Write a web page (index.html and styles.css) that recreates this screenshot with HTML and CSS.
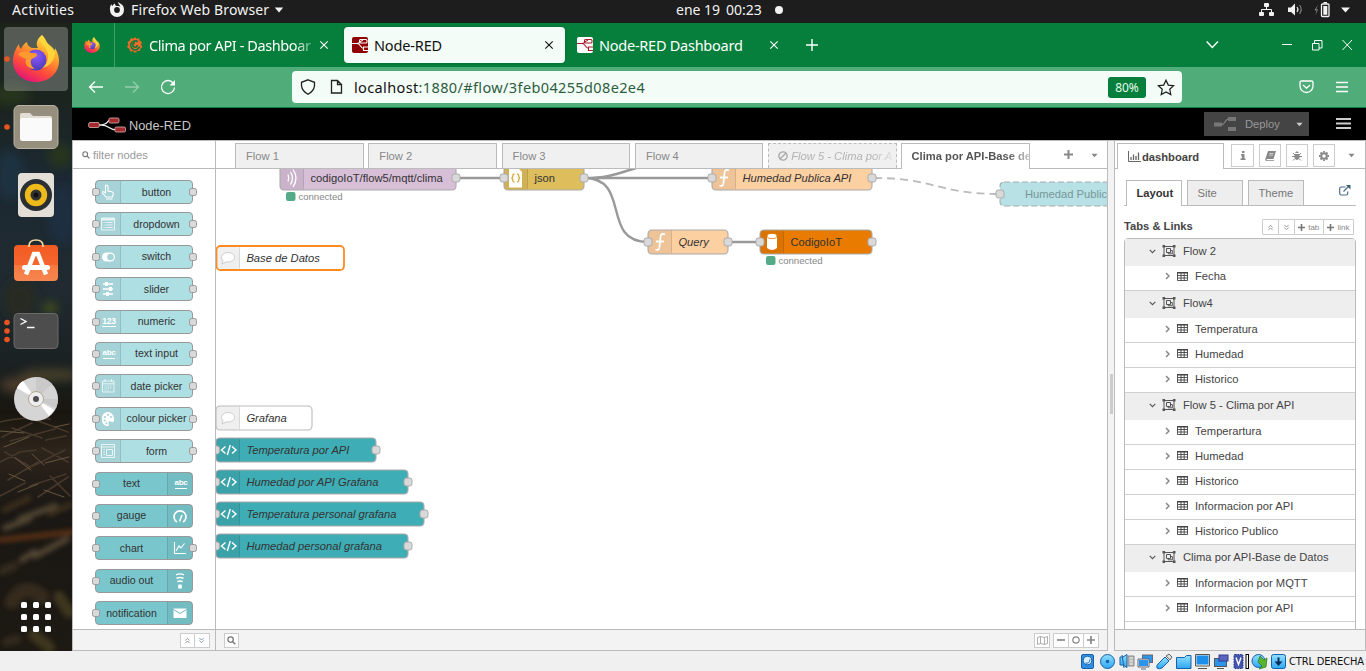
FILE: index.html
```html
<!DOCTYPE html>
<html lang="es">
<head>
<meta charset="utf-8">
<title>Node-RED</title>
<link rel="stylesheet" href="styles.css">
</head>
<body>
<svg class="defs" width="0" height="0" aria-hidden="true">
  <defs>
    <linearGradient id="fxFlame" x1="0.8" y1="0" x2="0.3" y2="1"><stop offset="0" stop-color="#fff44f"/><stop offset=".35" stop-color="#ffa62b"/><stop offset=".7" stop-color="#ff4b3a"/><stop offset="1" stop-color="#e3127a"/></linearGradient>
    <radialGradient id="fxGlobe" cx=".5" cy=".3" r=".7"><stop offset="0" stop-color="#9059ff"/><stop offset="1" stop-color="#4a3bb5"/></radialGradient>
    <linearGradient id="bag" x1="0" y1="0" x2="0" y2="1"><stop offset="0" stop-color="#f25c22"/><stop offset=".55" stop-color="#f4662e"/><stop offset=".56" stop-color="#f6793f"/><stop offset="1" stop-color="#f68650"/></linearGradient>
    <linearGradient id="vb" x1="0" y1="0" x2="0" y2="1"><stop offset="0" stop-color="#8fe0ff"/><stop offset="1" stop-color="#2fa6f0"/></linearGradient>
  </defs>
  <symbol id="firefox" viewBox="0 0 46 48">
    <path d="M29 1c4 4 5 8 7 11 2 1 4 3 4 5 2-1 2-1 2-3 3 5 4 9 4 13 0 12-10 21-23 21S0 39 0 27c0-7 3-13 6-17 0 3 1 4 2 5 1-3 4-6 6-7 0 3 2 5 5 6h6c-3-5 0-10 4-13z" fill="url(#fxFlame)"/>
    <circle cx="23" cy="26" r="10.5" fill="url(#fxGlobe)"/>
    <path d="M5 20c4-3 9-3 13-1 3 0 6 0 6 2-1 3-5 3-6 5-1 4 1 7 4 9-8 0-11-6-9-10-3-1-6-3-8-5z" fill="#ff9a2e"/>
    <path d="M29 1c-4 6 1 9 4 14 4 7 2 15-4 19 9-2 13-9 13-16-1-7-11-8-13-17z" fill="#ffd93b" opacity=".85"/>
  </symbol>
  <symbol id="times" viewBox="0 0 10 10"><path d="M1.300 1.300l7.400 7.400M8.700 1.300L1.300 8.700" fill="none" stroke="currentColor" stroke-width="1.100"/></symbol>
  <symbol id="nrfav" viewBox="0 0 16 16"><path d="M0 6.5h5c4 0 2.500-3 6-3M5 6.500c4 0 3 5 7 5" fill="none" stroke="currentColor" stroke-width="1.100"/><rect x="7.500" y="2.500" width="7.500" height="3.500" rx="1" fill="none" stroke="currentColor" stroke-width="1.100"/><path d="M16 10h-4.500v3.500H16" fill="none" stroke="currentColor" stroke-width="1.100"/></symbol>
  <symbol id="dblup" viewBox="0 0 8 8"><path d="M1.500 4L4 1.500 6.500 4M1.500 7L4 4.500 6.500 7" fill="none" stroke="currentColor"/></symbol>
  <symbol id="dbldown" viewBox="0 0 8 8"><path d="M1.500 1L4 3.500 6.500 1M1.500 4L4 6.500 6.500 4" fill="none" stroke="currentColor"/></symbol>
  <symbol id="caret" viewBox="0 0 8 5"><path d="M.5.500h7L4 4.500z" fill="currentColor"/></symbol>
  <symbol id="search" viewBox="0 0 10 10"><circle cx="4" cy="4" r="3" fill="none" stroke="currentColor" stroke-width="1.400"/><path d="M6.300 6.300L9.200 9.200" stroke="currentColor" stroke-width="1.600"/></symbol>
  <symbol id="group" viewBox="0 0 14 12"><path d="M2 1.500h10v9H2zM4.500 3.500h4v4h-4zM8.500 5.500h1.800v3.300H6.200V7.500" fill="none" stroke="currentColor"/><path d="M.5 0h2.600v2.600H.5zM10.900 0h2.600v2.600h-2.600zM.5 9.400h2.600V12H.5zM10.900 9.400h2.600V12h-2.600z" fill="currentColor"/></symbol>
  <symbol id="table" viewBox="0 0 11 9"><path d="M.5.500h10v8H.5zM.5 3.500h10M.5 6h10M4 1v7.500M7.200 1v7.500" fill="none" stroke="currentColor" stroke-width=".9"/><path d="M0 0h11v1.500H0z" fill="currentColor"/></symbol>
  <symbol id="down" viewBox="0 0 7 5"><path d="M.7.800L3.500 3.700 6.300.800" fill="none" stroke="currentColor" stroke-width="1.100"/></symbol>
  <symbol id="right" viewBox="0 0 5 8"><path d="M1 1l3 3-3 3" fill="none" stroke="currentColor" stroke-width="1.500"/></symbol>
</svg>

<header class="topbar">
  <span class="activities">Activities</span>
  <svg class="ff-mono" viewBox="0 0 16 16"><path d="M1 8a7 7 0 0 0 14 0c0-3-1-5-3-6-1-1-2-1-3-2 0 2 2 3 2.500 5C10 3.500 8.500 4 7.500 4 6 3.500 6 2.500 6 1.500 4.500 2 4 3 3.500 4 2.500 3.500 2.500 2.500 2.500 2 1 4 .8 6 1 8z" fill="#f2f2f2"/><circle cx="8" cy="8" r="2.900" fill="#1d1d1d"/></svg>
  <span class="app-name">Firefox Web Browser</span>
  <svg class="app-caret"><use href="#caret"/></svg>
  <span class="clock-day">ene 19</span><span class="clock-time">00:23</span><i class="dot"></i>
  <svg class="tray" width="93" height="17" viewBox="0 0 93 17">
    <g fill="#f2f2f2"><rect x="7" y="2" width="5" height="4" rx="1"/><rect x="2" y="11" width="5" height="4" rx="1"/><rect x="12" y="11" width="5" height="4" rx="1"/><path d="M31 6.500h3L38 2.500v12L34 11h-3zM93 6.500h-9l4.500 5z"/></g>
    <path d="M9.500 6v3M4.500 11V8.500h10V11" fill="none" stroke="#f2f2f2"/>
    <path d="M40 6q2 2.500 0 5" fill="none" stroke="#ddd" stroke-width="1.200"/><path d="M42.500 4q3.500 4.500 0 9" fill="none" stroke="#777" stroke-width="1.200"/>
    <path d="M61 4l-3.500 5.200h2.200L58.500 14 61 8.500h-2z" fill="#999"/>
    <rect x="64.500" y="3" width="7.500" height="12.500" rx="1" fill="none" stroke="#f2f2f2" stroke-width="1.300"/><path d="M66.300 5h4v8.700h-4zM66.500 1h3.500v1.500h-3.500z" fill="#f2f2f2"/>
  </svg>
</header>

<div class="desktop">
  <nav class="dock">
    <svg class="dock-art" width="72" height="628" viewBox="0 23 72 628">
      <defs>
        <linearGradient id="wall" x1="0" y1="0" x2="0" y2="1"><stop offset="0" stop-color="#1c241a"/><stop offset=".13" stop-color="#1b2420"/><stop offset=".24" stop-color="#1c2932"/><stop offset=".42" stop-color="#202a30"/><stop offset=".55" stop-color="#1b2122"/><stop offset=".62" stop-color="#18160f"/><stop offset=".68" stop-color="#2d241b"/><stop offset=".78" stop-color="#1a1714"/><stop offset="1" stop-color="#1d1913"/></linearGradient>
        <filter id="soft" x="-30%" y="-30%" width="160%" height="160%"><feGaussianBlur stdDeviation="5"/></filter>
        <filter id="soft1" x="-10%" y="-10%" width="120%" height="120%"><feGaussianBlur stdDeviation=".7"/></filter>
        <filter id="soft2" x="-30%" y="-30%" width="160%" height="160%"><feGaussianBlur stdDeviation="2.500"/></filter>
      </defs>
      <rect y="23" width="72" height="628" fill="url(#wall)"/>
      <g filter="url(#soft)"><ellipse cx="10" cy="95" rx="20" ry="10" fill="#26361a"/><ellipse cx="60" cy="155" rx="12" ry="12" fill="#25361b"/><ellipse cx="10" cy="175" rx="14" ry="25" fill="#1c3140"/><ellipse cx="62" cy="215" rx="14" ry="30" fill="#1c2e40"/><ellipse cx="20" cy="300" rx="16" ry="20" fill="#262c24"/><ellipse cx="50" cy="308" rx="7" ry="5" fill="#4c571c"/><ellipse cx="50" cy="375" rx="30" ry="6" fill="#46402c"/><ellipse cx="20" cy="385" rx="20" ry="8" fill="#4b3b2b"/></g>
      <g filter="url(#soft1)" fill="none" stroke-linecap="round">
        <path d="M0 422q25-6 50-3M2 437l30-14M10 441l45-12M30 418l38 14M0 462l20-10 16-2M8 480l30-18M25 470l40-20M42 448l26 14M5 452l24 14M30 486l36-12M50 476l20 20M0 496l25-13M46 440l20-4M12 428l30 10M38 497l30-20" stroke="#44372a" stroke-width="1.700"/>
        <path d="M4 447l25-10M15 458l16 12M45 463l24-6M9 474l16 7M44 490l20 7M0 431l24 2M32 454l12 11M55 427l14-3M18 492l20-8" stroke="#66563f" stroke-width="1"/>
      </g>
      <g filter="url(#soft2)" fill="none" stroke-linecap="round">
        <path d="M0 540l72-8" stroke="#5e3014" stroke-width="5"/><path d="M20 519l35-13M5 528l24-9M35 556l32-17M22 560l12-8" stroke="#514430" stroke-width="6"/><path d="M4 510l25-12M50 514l20-9" stroke="#40301f" stroke-width="5"/><path d="M12 602q12-20 30-5" stroke="#352c1c" stroke-width="15"/><path d="M34 635l15 12M59 597l10 15" stroke="#3d341e" stroke-width="12"/><path d="M2 571l12-5M7 642l10-3" stroke="#332a1a" stroke-width="9"/>
      </g>
      <rect x="4" y="27" width="64" height="64" rx="4" fill="#fff" opacity=".25"/>
      <use href="#firefox" x="13" y="34" width="46" height="48"/>
      <g fill="#e95420"><circle cx="7" cy="59" r="2.800"/><circle cx="7" cy="127" r="2.800"/><circle cx="7" cy="322.500" r="2.800"/><circle cx="7" cy="331" r="2.800"/><circle cx="7" cy="339.500" r="2.800"/></g>
      <rect x="14" y="105.500" width="44" height="43" rx="5" fill="#978f7e" stroke="#b9b2a3"/><path d="M20 115q0-2 2-2h8l3 3h17q2 0 2 2v10H20z" fill="#e2ded5"/><rect x="20" y="118" width="32" height="23" rx="2.500" fill="#fafafa"/>
      <rect x="18" y="173" width="36" height="44" rx="4" fill="#e4dfd6"/><circle cx="36" cy="195" r="16" fill="#2b2f34"/><circle cx="36" cy="195" r="11.200" fill="#edb91b"/><circle cx="36" cy="195" r="5.500" fill="#333"/><circle cx="36" cy="195" r="2.500" fill="#111"/>
      <rect x="14" y="245" width="44" height="36" rx="4" fill="url(#bag)"/><path d="M29 247v-1q0-6 7-6t7 6v1" fill="none" stroke="#f3d6a0" stroke-width="1.700"/><path d="M26 274.500l8-20.500h4l8 20.500" fill="none" stroke="#fff" stroke-width="4.500"/><rect x="22" y="265" width="28" height="5" rx="2.500" fill="#fff"/>
      <rect x="14" y="313.500" width="44" height="35" rx="4" fill="#4d4d4d" stroke="#6a6a6a"/><path d="M20.500 318.500l5.500 3-5.500 3M27 327.500h7.500" fill="none" stroke="#fff" stroke-width="1.400"/>
      <circle cx="36" cy="399" r="22" fill="#d5d5d5"/><path d="M36 399L36 377A22 22 0 0 1 52 384zM36 399L58 399A22 22 0 0 1 56 408z" fill="#c9c9c9"/><path d="M36 399L17 388q2-5 6-7zM36 399l18 11-5 6z" fill="#fff"/><circle cx="36" cy="399" r="7.500" fill="#eee" stroke="#b1a88e"/><circle cx="36" cy="399" r="3" fill="#4e4e4e"/>
      <g fill="#fff"><rect x="21" y="602" width="6" height="6" rx="1.500"/><rect x="33" y="602" width="6" height="6" rx="1.500"/><rect x="45" y="602" width="6" height="6" rx="1.500"/><rect x="21" y="614" width="6" height="6" rx="1.500"/><rect x="33" y="614" width="6" height="6" rx="1.500"/><rect x="45" y="614" width="6" height="6" rx="1.500"/><rect x="21" y="626" width="6" height="6" rx="1.500"/><rect x="33" y="626" width="6" height="6" rx="1.500"/><rect x="45" y="626" width="6" height="6" rx="1.500"/></g>
    </svg>
  </nav>

  <main class="browser">
    <div class="tabbar">
      <div class="pinned"><svg width="16" height="16"><use href="#firefox"/></svg></div>
      <div class="btab first">
        <svg width="16" height="16" viewBox="0 0 16 16"><path d="M8 0l1.500 2 2.500-1 .5 2.500L15 5l-1 2.500L15.500 10l-2 1.500L13 14l-2.700-.3L8 16l-2-2-3 .5L2.500 12 0 10l1.500-2.500L.5 5l2.300-1.200L4 1l2.500.8z" fill="#f26b2a"/><path d="M12.500 9.500A4.500 4.500 0 1 1 10.800 4.700 M10.200 8A2.200 2.200 0 1 1 8 5.900" fill="none" stroke="#0a7a3c" stroke-width="1.600"/></svg>
        <span class="btitle fade">Clima por API - Dashboar</span><svg class="x"><use href="#times"/></svg>
      </div>
      <div class="btab active"><span class="fav red"><svg width="16" height="16"><use href="#nrfav"/></svg></span><span class="btitle t2">Node-RED</span><svg class="x"><use href="#times"/></svg></div>
      <div class="btab third"><span class="fav white"><svg width="16" height="16"><use href="#nrfav"/></svg></span><span class="btitle t3">Node-RED Dashboard</span><svg class="x"><use href="#times"/></svg></div>
      <svg class="plus" width="12" height="12" viewBox="0 0 12 12"><path d="M6 0v12M0 6h12" stroke="#fff" stroke-width="1.400"/></svg>
      <svg class="winctl" width="147" height="12" viewBox="0 0 147 12" fill="none" stroke="#fff"><path d="M.7 2.500L6.300 8.500 12 2.500" stroke-width="1.400"/><path d="M76 5.500h10M106.500 4.500h6.500v6.500h-6.500zM108.500 4V1.500h7.500V9H113M136.500 1l9.500 10M146 1l-9.500 10"/></svg>
    </div>
    <div class="navbar">
      <svg class="navicons" width="88" height="16" viewBox="0 0 88 16" fill="none" stroke="#fff" stroke-width="1.300"><path d="M15 8H1.500M7 2.500L1.500 8 7 13.500"/><path d="M37 8h13.500M45 2.500L50.500 8 45 13.500" opacity=".4"/><path d="M85.500 4.500A6.500 6.500 0 1 0 86.500 8.500"/><path d="M87 1v5.500h-5.500z" fill="#fff" stroke="none"/></svg>
      <div class="urlbar">
        <svg width="46" height="16" viewBox="0 0 46 16" fill="none" stroke="#222" stroke-width="1.300"><path d="M8 .8l6.500 2.500v3.500Q13.800 12 8 15.300 2.200 12 1.500 6.800V3.300z"/><path d="M31.500 1.500h6l4 4v8.500h-10zM37.500 1.500v4h4"/></svg>
        <span class="url"><b>localhost</b>:1880/#flow/3feb04255d08e2e4</span>
        <span class="zoom">80%</span>
        <svg width="18" height="17" viewBox="0 0 18 17"><path d="M9 1.200l2.300 4.900 5.300.6-3.900 3.600 1.100 5.300L9 12.900l-4.800 2.700 1.100-5.300L1.400 6.700l5.300-.6z" fill="none" stroke="#1b1b1b" stroke-width="1.200"/></svg>
      </div>
      <svg class="navright" width="50" height="16" viewBox="0 0 50 16" fill="none" stroke="#fff" stroke-width="1.300"><path d="M1 3.500Q1 2 2.500 2h10Q14 2 14 3.500V7A6.500 6.500 0 0 1 1 7zM4 6l3.500 3.200L11 6"/><path d="M37 3.500h12M37 8h12M37 12.500h12"/></svg>
    </div>

    <div class="nr-header">
      <svg width="40" height="16" viewBox="0 0 40 16"><path d="M10 8c12 0 8-5 13-5.500M13 8c9 0 7 5 16 5" fill="none" stroke="#eee" stroke-width="1.300"/><g fill="#a52a2e" stroke="#c9a3a3" stroke-width=".9"><rect x=".7" y="5.500" width="10.500" height="5" rx="1.300"/><rect x="21" y="1" width="10" height="5" rx="1.300"/><rect x="27" y="10" width="10.500" height="5" rx="1.300"/></g></svg>
      <span class="nr-name">Node-RED</span>
      <div class="deploy"><svg width="22" height="14" viewBox="0 0 22 14"><path d="M0 5.500h8v4H0zM14 0h8v4h-8zM14 10h8v4h-8z" fill="#777"/><path d="M8 7.500c3 0 3-5 6-5.500" fill="none" stroke="#999"/></svg><span>Deploy</span><svg class="dcaret"><use href="#caret"/></svg></div>
      <svg class="burger" width="15" height="13" viewBox="0 0 15 13"><path d="M0 2h15M0 6.500h15M0 11h15" stroke="#ccc" stroke-width="2"/></svg>
    </div>

    <div class="editor">
      <aside class="palette">
        <div class="filter"><svg width="8" height="8"><use href="#search"/></svg><span>filter nodes</span></div>
        <div class="nodes">
          <div class="pnode in out"><i><svg viewBox="0 0 16 16"><path d="M5.500 9V2.200q0-1.200 1.200-1.200T8 2.200V7l4 .8q1.500.4 1.300 2L12.500 13H6L2.500 9q-.3-1.700 1.300-1.200zM6 15h6.500" fill="none" stroke="#fff" stroke-width="1.100"/></svg></i><span>button</span></div>
          <div class="pnode in out"><i><svg viewBox="0 0 16 16"><path d="M1.500 2h13v12h-13z" fill="none" stroke="#e6f4f5"/><path d="M1.500 2h13v2.500h-13z" fill="#e6f4f5"/><path d="M3.500 6.500h1.200m1 0h7M3.500 9h1.200m1 0h7M3.500 11.500h1.200m1 0h7" stroke="#e6f4f5"/></svg></i><span>dropdown</span></div>
          <div class="pnode in out"><i><svg viewBox="0 0 16 16"><rect x="2" y="3.500" width="13" height="9" rx="4.500" fill="#fff"/><circle cx="10.500" cy="8" r="3.300" fill="#a6d3d7"/></svg></i><span>switch</span></div>
          <div class="pnode in out"><i><svg viewBox="0 0 16 16"><path d="M3 3h10M3 8h10M3 13h10" stroke="#fff" stroke-width="1.500"/><path d="M5 1h3v4H5zM9 6h3v4H9zM6 11h3v4H6z" fill="#fff"/></svg></i><span>slider</span></div>
          <div class="pnode in out"><i><b>123</b></i><span>numeric</span></div>
          <div class="pnode in out"><i><b class="abc">abc</b></i><span>text input</span></div>
          <div class="pnode in out"><i><svg viewBox="0 0 16 16"><path d="M2.500 3h11.500v11H2.500zM2.500 5.800H14M5 1v3M11.500 1v3" fill="none" stroke="#e6f4f5"/><path d="M4.500 8h7.500M4.500 10h7.500M4.500 12h5" stroke="#e6f4f5" stroke-dasharray="1 .8"/></svg></i><span>date picker</span></div>
          <div class="pnode in out"><i><svg viewBox="0 0 16 16"><path d="M8 1C3 1 2 5 2 8.500 2 13 5 15.500 8 15c2-.5-.3-3 1-4.500 1.500-1.200 4 2 4.800 0C15 6 12 1 8 1z" fill="#fff"/><g fill="#a6d3d7"><circle cx="5" cy="6" r="1.100"/><circle cx="8" cy="3.800" r="1.100"/><circle cx="11" cy="6" r="1.100"/><circle cx="4.700" cy="9.500" r="1.100"/><circle cx="6.500" cy="12.300" r="1.100"/></g></svg></i><span>colour picker</span></div>
          <div class="pnode in out"><i><svg viewBox="0 0 16 16"><path d="M1.500 1.500h13v13h-13zM1.500 4h13M6.500 6.500h6v6h-6zM3.500 6.500h1.500M3.500 9h1.500M3.500 11.500h1.500" fill="none" stroke="#e6f4f5"/></svg></i><span>form</span></div>
          <div class="pnode in dark"><span>text</span><i><b class="abc">abc</b></i></div>
          <div class="pnode in dark"><span>gauge</span><i><svg viewBox="0 0 16 16"><path d="M5 14A6 6 0 1 1 11 14" fill="none" stroke="#fff" stroke-width="1.700"/><path d="M7.500 13.500L10 7" stroke="#fff" stroke-width="1.500"/></svg></i></div>
          <div class="pnode in out dark"><span>chart</span><i><svg viewBox="0 0 16 16"><path d="M2.500 2v11.500H14M4 11l3-5 2 2 3.500-4.500" fill="none" stroke="#fff" stroke-width="1.100"/></svg></i></div>
          <div class="pnode in dark"><span>audio out</span><i><svg viewBox="0 0 16 18"><path d="M6 13h4v4.500H6z" fill="#fff"/><path d="M3.500 2q4.500-2 9 0M4 6q4-2 8 0M5 9.800q3-1.700 6 0" fill="none" stroke="#fff" stroke-width="1.600"/></svg></i></div>
          <div class="pnode in dark"><span>notification</span><i><svg viewBox="0 0 16 16"><path d="M1.500 3.500h13v9.500h-13z" fill="#fff"/><path d="M1.500 4.500L8 8.500l6.500-4" fill="none" stroke="#70b8bf"/></svg></i></div>
        </div>
        <div class="pfoot"><span><svg><use href="#dblup"/></svg></span><span><svg><use href="#dbldown"/></svg></span></div>
      </aside>

      <section class="workspace">
        <div class="flowtabs">
          <div class="ftab">Flow 1</div><div class="ftab">Flow 2</div><div class="ftab">Flow 3</div><div class="ftab">Flow 4</div>
          <div class="ftab off"><svg width="10" height="10" viewBox="0 0 9 9"><circle cx="4.500" cy="4.500" r="3.700" fill="none" stroke="#aaa" stroke-width="1.300"/><path d="M2 7l5-5" stroke="#aaa" stroke-width="1.300"/></svg><span>Flow 5 - Clima por A</span></div>
          <div class="ftab on"><span>Clima por API-Base de</span></div>
          <svg class="addflow" width="9" height="9" viewBox="0 0 9 9"><path d="M4.500 0v9M0 4.500h9" stroke="#888" stroke-width="2"/></svg>
          <svg class="flowcaret"><use href="#caret"/></svg>
        </div>
        <svg class="canvas" width="891" height="460" viewBox="216 169 891 460">
          <g fill="none" stroke="#999" stroke-width="2.400"><path d="M456 178h48M584 178H712M728 242h32M584 178c48 0 16 64 64 64M584 178c25 0 35-5 52-10"/><path d="M874 178C936 178 936 194 1000 194" stroke="#bbb" stroke-width="1.800" stroke-dasharray="8 5"/></g>
          <g stroke="#aaa" stroke-width="1.100">
            <rect x="280" y="166" width="176" height="24" rx="4" fill="#d8bfd8"/><rect x="504" y="166" width="80" height="24" rx="4" fill="#debd5c"/><rect x="712" y="166" width="160" height="24" rx="4" fill="#fdd0a2"/><rect x="648" y="230" width="80" height="24" rx="4" fill="#fdd0a2"/><rect x="760" y="230" width="112" height="24" rx="4" fill="#e97b00"/>
            <rect x="1000" y="182" width="150" height="24" rx="4" fill="#b7e1e4" stroke-dasharray="6 3"/>
            <rect x="216.500" y="246" width="127.500" height="24" rx="4" fill="#fff" stroke="#ff8a20" stroke-width="1.800"/>
            <rect x="216" y="406" width="96" height="24" rx="4" fill="#fff" stroke="#bbb"/>
            <rect x="216" y="438" width="160" height="24" rx="4" fill="#3fadb5"/><rect x="216" y="470" width="192" height="24" rx="4" fill="#3fadb5"/><rect x="216" y="502" width="208" height="24" rx="4" fill="#3fadb5"/><rect x="216" y="534" width="192" height="24" rx="4" fill="#3fadb5"/>
          </g>
          <g fill="#000" opacity=".06"><rect x="280.500" y="166" width="23" height="23.500" rx="3"/><rect x="504.500" y="166" width="23" height="23.500" rx="3"/><rect x="712.500" y="166" width="23" height="23.500" rx="3"/><rect x="648.500" y="230.500" width="23" height="23" rx="3"/><rect x="760.500" y="230.500" width="23" height="23" rx="3"/><rect x="217.500" y="247" width="22" height="22" rx="3"/><rect x="216.500" y="406.500" width="23" height="23" rx="3"/><rect x="216" y="438.500" width="23.500" height="23" rx="3"/><rect x="216" y="470.500" width="23.500" height="23" rx="3"/><rect x="216" y="502.500" width="23.500" height="23" rx="3"/><rect x="216" y="534.500" width="23.500" height="23" rx="3"/></g>
          <path d="M303.500 166v23.500M527.500 166v23.500M735.500 166v23.500M671.500 230.500v23M783.500 230.500v23M239.500 247v22M239.500 406.500v23M239.500 438.500v23M239.500 470.500v23M239.500 502.500v23M239.500 534.500v23" stroke="#000" opacity=".12"/>
          <g fill="none" stroke="#fff"><path d="M288 174.500q1.500 3.500 0 7M290.500 172q4 6 0 12.500M293 169.500q6 8.500 0 17.500" stroke-width="1.300"/></g>
          <path d="M509 168h9l4 4v15.500h-13z" fill="#fff"/>
          <path d="M514.500 174q-1.700 0-1.700 1.500 0 2.500-1.500 2.500 1.500 0 1.500 2.500 0 1.500 1.700 1.500M517 174q1.700 0 1.700 1.500 0 2.500 1.500 2.500-1.500 0-1.500 2.500 0 1.500-1.700 1.500" fill="none" stroke="#d5ae3f" stroke-width="1.300"/>
          <g fill="none" stroke="#fff" stroke-width="1.800"><path d="M729 170.500q-4-2-4.500 2.500l-1 10q-.5 4-4 2.500M720 177.500h8"/><path d="M665 234.500q-4-2-4.500 2.500l-1 10q-.5 4-4 2.500M656 241.500h8"/></g>
          <path d="M767 236v12q5 4 10 0v-12z" fill="#fff"/><ellipse cx="772" cy="236" rx="5" ry="2.600" fill="#fff" stroke="#dc7400" stroke-width=".8"/>
          <g fill="#fff" stroke="#ccc"><path d="M228 252.500c4 0 6.500 2 6.500 4.800s-3 4.700-6.500 4.700h-2l-4 2 1-3.500c-3.500-3-.5-8 5-8z"/><path d="M228 412.500c4 0 6.500 2 6.500 4.800s-3 4.700-6.500 4.700h-2l-4 2 1-3.500c-3.500-3-.5-8 5-8z"/></g>
          <g fill="#d9d9d9" stroke="#aaa"><rect x="452" y="174" width="8" height="8" rx="2.400"/><rect x="500" y="174" width="8" height="8" rx="2.400"/><rect x="580" y="174" width="8" height="8" rx="2.400"/><rect x="708" y="174" width="8" height="8" rx="2.400"/><rect x="868" y="174" width="8" height="8" rx="2.400"/><rect x="644" y="238" width="8" height="8" rx="2.400"/><rect x="724" y="238" width="8" height="8" rx="2.400"/><rect x="756" y="238" width="8" height="8" rx="2.400"/><rect x="868" y="238" width="8" height="8" rx="2.400"/><rect x="996" y="190" width="8" height="8" rx="2.400"/><rect x="212" y="446" width="7.500" height="8" rx="2.400"/><rect x="212" y="478" width="7.500" height="8" rx="2.400"/><rect x="212" y="510" width="7.500" height="8" rx="2.400"/><rect x="212" y="542" width="7.500" height="8" rx="2.400"/><rect x="372" y="446" width="8" height="8" rx="2.400"/><rect x="404" y="478" width="8" height="8" rx="2.400"/><rect x="420" y="510" width="8" height="8" rx="2.400"/><rect x="404" y="542" width="8" height="8" rx="2.400"/></g>
          <g fill="none" stroke="#fff" stroke-width="1.400"><path d="M225.500 446.500l-4 3.500 4 3.500M232 446.500l4 3.500-4 3.500M230.300 445l-3 10"/><path d="M225.500 478.500l-4 3.500 4 3.500M232 478.500l4 3.500-4 3.500M230.300 477l-3 10"/><path d="M225.500 510.500l-4 3.500 4 3.500M232 510.500l4 3.500-4 3.500M230.300 509l-3 10"/><path d="M225.500 542.500l-4 3.500 4 3.500M232 542.500l4 3.500-4 3.500M230.300 541l-3 10"/></g>
          <g fill="#5a8"><rect x="286" y="192" width="9.500" height="9" rx="2"/><rect x="766" y="256" width="9.500" height="9" rx="2"/></g>
          <g class="label"><text x="310.400" y="182">codigoIoT/flow5/mqtt/clima</text><text x="534.400" y="182">json</text><text x="790.400" y="246">CodigoIoT</text><text x="1025" y="198" class="dim">Humedad Public</text></g>
          <g class="label it"><text x="742.400" y="182">Humedad Publica API</text><text x="678.400" y="246">Query</text><text x="246.400" y="262">Base de Datos</text><text x="246.400" y="422">Grafana</text><text x="246.400" y="454">Temperatura por API</text><text x="246.400" y="486">Humedad por API Grafana</text><text x="246.400" y="518">Temperatura personal grafana</text><text x="246.400" y="550">Humedad personal grafana</text></g>
          <g class="status"><text x="298.400" y="200">connected</text><text x="778.400" y="264">connected</text></g>
        </svg>
        <div class="wfoot">
          <span class="wb"><svg width="9" height="9"><use href="#search"/></svg></span>
          <span class="wb map"><svg width="11" height="9" viewBox="0 0 11 9"><path d="M.5 1.500l3-1 4 1 3-1v7l-3 1-4-1-3 1zM3.500.500v7M7.500 1.500v7" fill="none" stroke="#999" stroke-width=".8"/></svg></span>
          <span class="zoomset"><span class="wb"><svg width="8" height="8" viewBox="0 0 8 8"><path d="M0 4h8" stroke="#888" stroke-width="1.700"/></svg></span><span class="wb"><svg width="8" height="8" viewBox="0 0 8 8"><circle cx="4" cy="4" r="3.200" fill="none" stroke="#888" stroke-width="1.200"/></svg></span><span class="wb"><svg width="8" height="8" viewBox="0 0 8 8"><path d="M0 4h8M4 0v8" stroke="#888" stroke-width="1.700"/></svg></span></span>
        </div>
      </section>

      <div class="splitter"><i></i></div>

      <aside class="sidebar">
        <div class="stabs">
          <div class="stab"><svg width="13" height="11" viewBox="0 0 13 11"><path d="M.5 0v10.500H13" fill="none" stroke="#666"/><path d="M3 9V6M5.500 9V3.500M8 9V5M10.500 9V1.500" stroke="#666" stroke-width="1.300"/></svg><span>dashboard</span></div>
          <span class="sb"><svg width="6" height="9" viewBox="0 0 6 9"><path d="M2 0h2.500v2H2zM1 3h3.500v4.500h1V9h-5V7.500h1.300v-3H1z" fill="#888"/></svg></span>
          <span class="sb b2"><svg width="11" height="10" viewBox="0 0 11 10"><path d="M3 0h8L8.500 8H2q-1 .5 0 1.200h7V10H1.500Q0 9.500.3 8z" fill="#888"/><path d="M4.500 2.500h4M4 4.200h4" stroke="#eee" stroke-width=".7"/></svg></span>
          <span class="sb b3"><svg width="10" height="10" viewBox="0 0 10 10"><path d="M3 2q2-3.500 4 0zM2.500 3h5v4Q5 11 2.500 7z" fill="#888"/><path d="M1 2l2 2M9 2L7 4M0 5.500h10M1 9.500l2-2M9 9.500l-2-2" stroke="#888"/></svg></span>
          <span class="sb b4"><svg width="10" height="10" viewBox="0 0 10 10"><circle cx="5" cy="5" r="2.800" fill="none" stroke="#888" stroke-width="2"/><path d="M5 0v1.500M5 8.500V10M0 5h1.500M8.500 5H10M1.500 1.500l1 1M7.500 7.500l1 1M8.500 1.500l-1 1M2.500 7.500l-1 1" stroke="#888" stroke-width="1.800"/></svg></span>
          <svg class="scaret"><use href="#caret"/></svg>
        </div>
        <div class="dash">
          <div class="dtabs"><div class="dtab sel">Layout</div><div class="dtab">Site</div><div class="dtab">Theme</div>
            <svg width="12" height="11" viewBox="0 0 12 11"><path d="M6.500 2H2.200Q.7 2 .7 3.500v5Q.7 10 2.200 10h5Q8.700 10 8.700 8.500V6.500M4.500 6.500L10 1" fill="none" stroke="#4a6e8c" stroke-width="1.200"/><path d="M7 0h4.500v4.500z" fill="#3c5c78"/></svg></div>
          <div class="tl"><strong>Tabs &amp; Links</strong><span class="tb"><svg><use href="#dblup"/></svg></span><span class="tb"><svg><use href="#dbldown"/></svg></span><span class="tb w1"><svg viewBox="0 0 7 7"><path d="M3.500 0v7M0 3.500h7" stroke="#777" stroke-width="1.600"/></svg>tab</span><span class="tb w2"><svg viewBox="0 0 7 7"><path d="M3.500 0v7M0 3.500h7" stroke="#777" stroke-width="1.600"/></svg>link</span></div>
          <div class="tree">
            <div class="grp"><svg class="c"><use href="#down"/></svg><svg class="g"><use href="#group"/></svg>Flow 2</div>
            <div class="item first-item"><svg class="c"><use href="#right"/></svg><svg class="t"><use href="#table"/></svg>Fecha</div>
            <div class="grp"><svg class="c"><use href="#down"/></svg><svg class="g"><use href="#group"/></svg>Flow4</div>
            <div class="item"><svg class="c"><use href="#right"/></svg><svg class="t"><use href="#table"/></svg>Temperatura</div>
            <div class="item"><svg class="c"><use href="#right"/></svg><svg class="t"><use href="#table"/></svg>Humedad</div>
            <div class="item"><svg class="c"><use href="#right"/></svg><svg class="t"><use href="#table"/></svg>Historico</div>
            <div class="grp"><svg class="c"><use href="#down"/></svg><svg class="g"><use href="#group"/></svg>Flow 5 - Clima por API</div>
            <div class="item"><svg class="c"><use href="#right"/></svg><svg class="t"><use href="#table"/></svg>Temperartura</div>
            <div class="item"><svg class="c"><use href="#right"/></svg><svg class="t"><use href="#table"/></svg>Humedad</div>
            <div class="item"><svg class="c"><use href="#right"/></svg><svg class="t"><use href="#table"/></svg>Historico</div>
            <div class="item"><svg class="c"><use href="#right"/></svg><svg class="t"><use href="#table"/></svg>Informacion por API</div>
            <div class="item"><svg class="c"><use href="#right"/></svg><svg class="t"><use href="#table"/></svg>Historico Publico</div>
            <div class="grp"><svg class="c"><use href="#down"/></svg><svg class="g"><use href="#group"/></svg>Clima por API-Base de Datos</div>
            <div class="item"><svg class="c"><use href="#right"/></svg><svg class="t"><use href="#table"/></svg>Informacion por MQTT</div>
            <div class="item"><svg class="c"><use href="#right"/></svg><svg class="t"><use href="#table"/></svg>Informacion por API</div>
          </div>
        </div>
        <div class="sfoot"></div>
      </aside>
    </div>
  </main>
</div>

<footer class="vmbar">
  <svg width="206" height="18" viewBox="1080 653 206 18">
    <g stroke="#1761a8" fill="url(#vb)">
      <rect x="1081.500" y="654.500" width="12" height="14" rx="1.500" fill="#2f8fe6"/><circle cx="1087.500" cy="660.500" r="4.300" fill="#d8f1ff"/><circle cx="1107.500" cy="661.500" r="7"/>
      <path d="M1120 657h3l4-2.500v13l-4-2.500h-3z"/><path d="M1128 656h6v10h-6z" fill="#bbb" stroke="#888"/>
      <rect x="1142.500" y="655" width="10" height="7.500" fill="#2a95ea" stroke="#667"/><rect x="1138.500" y="659.500" width="10" height="7" fill="#2a95ea" stroke="#eee"/><path d="M1138 659h11v8h-11zM1141 669h5" fill="none" stroke="#667"/>
      <path d="M1158 664l7-7 4 4-7 7q-3 1.500-5 0-1-2 1-4z"/><path d="M1166 656l3-2 3 3-2 3z" fill="#ddd" stroke="#666"/>
      <path d="M1176.500 657.500h8l2-2h4.500v13h-14.500z"/>
      <rect x="1196" y="655" width="13" height="10" fill="#1b8fe9" stroke="#eee"/><path d="M1195.500 654.500h14v11.500h-14zM1198 668.500h9" fill="none" stroke="#555"/>
      <rect x="1214.500" y="658.500" width="12" height="8" fill="#2a95ea" stroke="#555"/><path d="M1217 668.500h7" stroke="#555"/><rect x="1219" y="655" width="9" height="6" fill="#5b65bd" stroke="#303c90"/>
      <rect x="1234" y="654.500" width="9" height="14" rx="1" fill="#4353ae" stroke="#283888" stroke-dasharray="1.500 1"/>
      <circle cx="1258.500" cy="661" r="6.500"/>
      <rect x="1271.500" y="654.500" width="14" height="14" rx="2"/>
    </g>
    <circle cx="1107.500" cy="661.500" r="1.800" fill="#1761a8"/><path d="M1085.500 663q4 1 4.500-3.500M1122 655l2 13" fill="none" stroke="#1761a8"/><path d="M1130 658h3M1130 661h3M1130 664h3" stroke="#eee"/>
    <path d="M1236 657.500l2.500 7 2.500-7" fill="none" stroke="#fff" stroke-width="1.400"/><rect x="1246" y="654.500" width="2.500" height="14" fill="#fff" stroke="#000"/>
    <path d="M1260 656l4 4 3-2-1 9-7 2 3-3-4-4z" fill="#58b531" stroke="#28711a" stroke-width=".7"/>
    <path d="M1277.500 657.500h2v4h3l-4 4.500-4-4.500h3z" fill="#072d5a"/>
  </svg>
  <span>CTRL DERECHA</span>
</footer>
</body>
</html>
```
FILE: styles.css
```css
*, *::before, *::after { box-sizing: border-box; }
html, body { margin: 0; width: 1366px; height: 671px; overflow: hidden; }
body { font: 11.2px "Liberation Sans", Arial, sans-serif; color: #444; background: #f0f0f0; display: flex; flex-direction: column; }
svg { display: block; flex: none; }
span, .btab, .pnode, .ftab, .grp, .item { white-space: nowrap; }
.defs { position: absolute; }

.topbar { height: 23px; flex: none; background: #1d1d1d; color: #f2f2f2; display: flex; align-items: center; padding: 0 16px 4px 12px; font: 14px "Noto Sans", sans-serif; }
.activities { width: 97px; letter-spacing: .4px; }
.ff-mono { width: 16px; height: 16px; }
.app-name { margin-left: 6px; width: 143px; letter-spacing: .15px; }
.app-caret { width: 10px; height: 6px; }
.clock-day { margin-left: 392px; width: 50px; }
.clock-time { width: 49px; }
.dot { width: 8px; height: 8px; border-radius: 50%; background: #f2f2f2; }
.tray { margin-left: auto; }

.desktop { display: flex; height: 628px; flex: none; }
.dock { width: 72px; flex: none; }
.browser { width: 1294px; display: flex; flex-direction: column; }

.tabbar { height: 44px; flex: none; background: #057f3b; display: flex; align-items: center; color: #fff; font: 14.5px "Noto Sans", sans-serif; letter-spacing: -.25px; }
.pinned { width: 43px; height: 44px; border-right: 1px solid #3f9d68; display: flex; align-items: center; padding-left: 12px; }
.btab { display: flex; align-items: center; height: 36px; border-radius: 4px; }
.btab .x { width: 10px; height: 10px; margin-left: auto; }
.btitle { margin-left: 6px; }
.first { width: 220px; padding: 0 6px 0 12px; }
.fade { width: 169px; margin-right: -2px; letter-spacing: -.4px; -webkit-mask-image: linear-gradient(90deg, #000 145px, transparent 172px); mask-image: linear-gradient(90deg, #000 145px, transparent 172px); }
.t2 { letter-spacing: -.15px; }
.active { width: 221px; margin-left: 9px; padding: 0 11px 0 8px; background: #f4fcf7; color: #111; box-shadow: 0 0 3px #0358297a; }
.third { width: 220px; padding: 0 6px 0 12px; }
.fav { width: 16px; height: 16px; border-radius: 2px; }
.red { background: #8f0000; color: #fff; }
.white { background: #fff; color: #a61c28; }
.plus { margin-left: 21px; }
.winctl { margin-left: auto; margin-right: 13px; }

.navbar { height: 41px; flex: none; background: #50ac79; border-bottom: 1px solid #057f3b; display: flex; align-items: center; }
.navicons { margin-left: 16px; }
.urlbar { margin-left: 116px; width: 890px; height: 32px; border-radius: 4px; background: #f4fcf7; display: flex; align-items: center; padding: 0 7px 0 8px; font: 14.5px "Noto Sans", sans-serif; color: #2d5d40; }
.url { margin-left: 8px; letter-spacing: .37px; }
.url b { font-weight: 400; color: #111; }
.zoom { margin-left: auto; margin-right: 11px; width: 38px; height: 21px; line-height: 21px; border-radius: 3px; background: #057f3b; color: #e4fbed; text-align: center; font-size: 12px; }
.navright { margin-left: 117px; }

.nr-header { height: 32px; flex: none; background: #000; display: flex; align-items: center; padding: 2px 15px 0 16px; color: #c7c7c7; font-size: 12.8px; }
.nr-name { margin-left: 1px; }
.deploy { margin-left: auto; width: 105px; height: 24px; margin-bottom: 2px; background: #444; color: #999; display: flex; align-items: center; padding-left: 10px; font-size: 11.2px; }
.deploy span { margin-left: 9px; width: 51px; }
.dcaret { width: 7px; height: 5px; color: #ccc; }
.burger { margin-left: 27px; margin-bottom: 4px; }

.editor { height: 511px; display: flex; border-top: 1px solid #bbb; background: #fff; }
.palette { width: 144px; border: solid #bbb; border-width: 0 1px; display: flex; flex-direction: column; }
.filter { height: 28px; border-bottom: 1px solid #bbb; display: flex; align-items: center; padding-left: 9px; color: #999; }
.filter svg { color: #777; }
.filter span { margin-left: 3px; }
.nodes { height: 460px; padding: 11px 22px 0; display: grid; grid-auto-rows: 24px; row-gap: 8.4px; }
.pnode { position: relative; display: flex; align-items: center; border: 1px solid #999; border-radius: 4px; background: #aedfe3; color: #333; font-size: 10.6px; }
.pnode span { flex: 1; text-align: center; padding-bottom: 1px; }
.pnode i { width: 25px; height: 22px; background: #0000000d; border-right: 1px solid #0000001a; display: flex; align-items: center; justify-content: center; font-style: normal; }
.pnode.dark { background: #79c7cd; }
.pnode.dark i { border-right: 0; border-left: 1px solid #0000001a; }
.pnode i svg { width: 16px; height: 16px; }
.pnode b { font-size: 8.5px; letter-spacing: -.3px; line-height: 8px; padding-bottom: 1px; margin-left: 2px; color: #fff; border-bottom: 1px solid #fff; }
.pnode .abc { font-size: 8px; }
.in::before, .out::after { content: ""; position: absolute; top: 7px; width: 8px; height: 8px; border: 1px solid #999; border-radius: 2.5px; background: #d9d9d9; }
.in::before { left: -4px; }
.out::after { right: -5px; }
.pfoot, .wfoot, .sfoot { height: 22px; background: #f3f3f3; border: solid #bbb; border-width: 1px 0; flex: none; }
.pfoot { display: flex; justify-content: flex-end; align-items: center; padding-right: 5px; }
.pfoot span { width: 15px; height: 15px; border: 1px solid #ccc; background: #fff; padding: 3px; color: #888; }
.pfoot span + span { width: 16px; margin-left: -1px; color: #6f8fb5; }
.pfoot svg { width: 7px; height: 7px; }

.workspace { width: 891px; flex: none; display: flex; flex-direction: column; }
.flowtabs { height: 28px; flex: none; display: flex; padding: 2px 0 0 19px; border-bottom: 1px solid #bbb; }
.ftab { width: 128.5px; margin-right: 4.8px; flex: none; height: 25px; border: 1px solid #bbb; border-bottom: 0; background: #f0f0f0; color: #888; line-height: 25px; padding-left: 10px; overflow: hidden; display: flex; align-items: center; }
.off { border-style: dashed; color: #b3b3b3; font-style: italic; padding-left: 9px; }
.off span { margin-left: 3px; }
.on { background: #fff; color: #555; font-weight: 700; height: 26px; padding-left: 9px; }
.off span, .on span { -webkit-mask-image: linear-gradient(90deg, #000 80%, #0004 100%); mask-image: linear-gradient(90deg, #000 80%, #0004 100%); }
.addflow { margin: 7px 0 0 29px; }
.flowcaret { width: 7px; height: 5px; margin: 10px 0 0 18px; color: #888; }
.canvas { background: #fff; }
.label { font-size: 11.2px; fill: #333; }
.it { font-style: italic; }
.dim { fill: #78979a; }
.status { font-size: 9.6px; fill: #888; }
.wfoot { display: flex; align-items: center; padding: 0 9px 0 8px; }
.wb { width: 15px; height: 15px; border: 1px solid #ccc; background: #fff; display: flex; align-items: center; justify-content: center; color: #777; }
.map { margin-left: auto; width: 16px; }
.zoomset { display: flex; margin-left: 3px; }
.zoomset .wb { width: 16px; margin-right: -1px; }

.splitter { width: 8px; flex: none; background: #f3f3f3; border: solid #bbb; border-width: 0 1px; display: flex; align-items: center; justify-content: center; padding-bottom: 4px; }
.splitter i { width: 3px; height: 40px; background: #ccc; }

.sidebar { width: 251px; border-right: 1px solid #bbb; display: flex; flex-direction: column; }
.stabs { height: 28px; flex: none; border-bottom: 1px solid #bbb; display: flex; align-items: flex-start; padding: 2px 0 0 2px; }
.stab { width: 107px; height: 26px; border: 1px solid #bbb; border-bottom: 0; background: #fff; display: flex; align-items: center; padding-left: 10px; font-weight: 700; color: #444; }
.stab span { margin-left: 1px; }
.sb { width: 23px; height: 23px; margin: 1px 0 0 7px; border: 1px solid #ccc; display: flex; align-items: center; justify-content: center; }
.b2, .b3, .b4 { width: 22px; margin-left: 5px; }
.scaret { width: 7px; height: 5px; margin: 10px 0 0 13px; color: #888; }
.dash { height: 460px; padding: 11px 9px 0; overflow: hidden; }
.dtabs { height: 26px; border-bottom: 1px solid #bbb; display: flex; padding-left: 2px; }
.dtab { width: 56px; height: 25px; margin-right: 5px; border: 1px solid #bbb; border-bottom: 0; background: #eee; color: #777; padding-left: 9.5px; line-height: 25px; }
.sel { height: 26px; background: #fff; color: #333; font-weight: 700; }
.dtabs svg { margin: 5px 0 0 30px; }
.tl { height: 32px; display: flex; align-items: flex-end; padding-bottom: 3px; }
.tl strong { width: 138px; line-height: 17px; font-size: 11.2px; }
.tb { width: 16.5px; height: 16px; margin-right: -.5px; border: 1px solid #ccc; border-radius: 1px; display: flex; align-items: center; justify-content: center; font-size: 8px; color: #888; gap: 3px; }
.tb svg { width: 7px; height: 7px; }
.w1 { width: 29.5px; }
.w2 { width: 31px; }
.tree { width: 232px; height: 400px; border: 1px solid #bbb; border-radius: 4px 4px 0 0; }
.grp { height: 27px; background: #eee; display: flex; align-items: center; padding: 0 0 3px 24px; }
.grp .c { width: 7px; height: 5px; }
.grp .g { width: 14px; height: 12px; margin: 0 7px 0 6px; }
.grp svg { color: #555; }
.item { height: 25px; display: flex; align-items: center; border-bottom: 1px solid #d0d0d0; padding: 0 0 3px 40px; }
.first-item { padding-bottom: 4px; }
.item .c { width: 5px; height: 8px; color: #888; }
.item .t { width: 11px; height: 9px; margin: 0 7px; }

.vmbar { height: 20px; display: flex; align-items: center; padding: 1px 0 0 1080px; font: 11px "DejaVu Sans Condensed", "DejaVu Sans", sans-serif; font-stretch: condensed; color: #111; }
.vmbar span { margin-left: 3px; letter-spacing: -.15px; }
```
